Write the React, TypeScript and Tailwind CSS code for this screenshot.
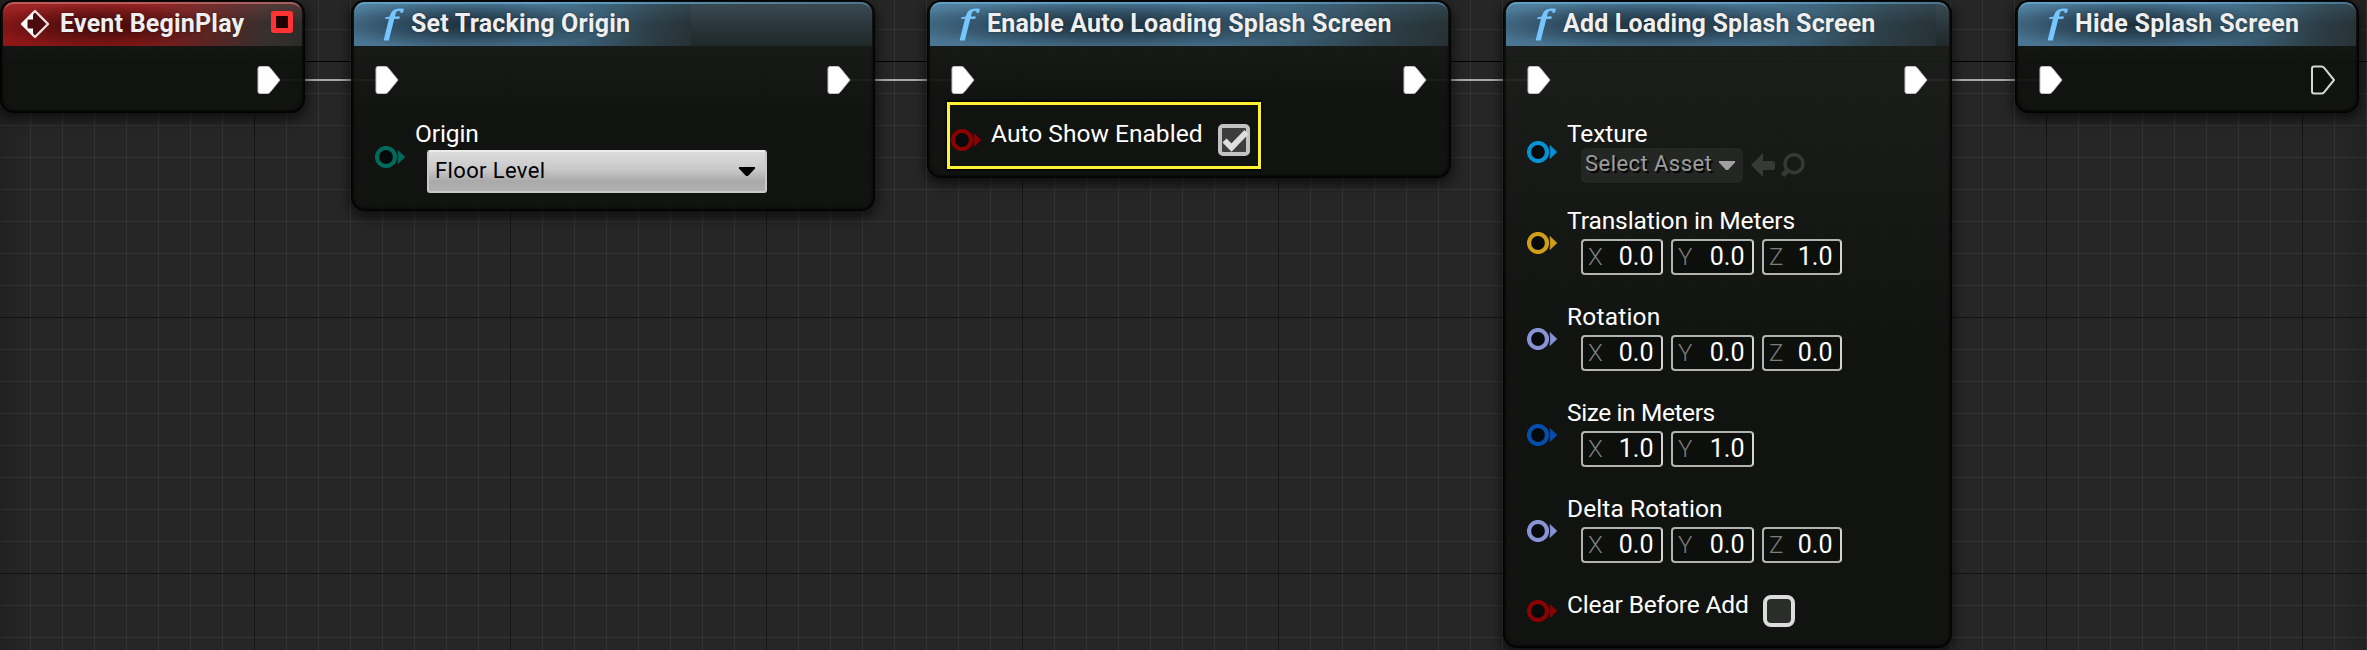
import type { ReactNode } from "react";
import clsx from "clsx";

function FunctionIcon() {
  return (
    <span className="flex h-11 w-[57px] items-center justify-center pl-[17px]">
      <span className="-mt-[5px] inline-block scale-x-[1.5] font-['Liberation_Serif',serif] text-[33px] leading-[40px] text-[#76c6ff] italic [-webkit-text-stroke:.8px_#76c6ff]">
        f
      </span>
    </span>
  );
}

function EventIcon() {
  return (
    <span className="flex h-11 w-[57px] items-center pl-[17px]">
      <svg width="30" height="30" viewBox="0 0 30 30">
        <path d="M15 2 28 15 15 28 2 15Z" fill="#4a0c0c" stroke="#f0dede" strokeWidth="2.4" strokeLinejoin="round" />
        <path d="M13 3 13 10.5H7.5V19.5H13V27L1 15Z" fill="#ffffff" />
      </svg>
    </span>
  );
}

function ExecPin({ hollow = false }: { hollow?: boolean }) {
  return (
    <svg width="24" height="30" viewBox="0 0 24 30">
      <path
        d="M1 3.5Q1 1.5 3 1.5H10.5Q12 1.5 13 2.7L23 15 13 27.3Q12 28.5 10.5 28.5H3Q1 28.5 1 26.5Z"
        fill={hollow ? "#0c0f0c" : "#ffffff"}
        stroke={hollow ? "#d6d6d6" : "#c4c4c4"}
        strokeWidth={hollow ? 2 : 1}
        strokeLinejoin="round"
      />
    </svg>
  );
}

function DataPin({ className }: { className: string }) {
  return (
    <svg width="30" height="22" viewBox="0 0 30 22" className={clsx("shrink-0", className)}>
      <circle cx="11" cy="11" r="9" fill="#070a0a" stroke="currentColor" strokeWidth="4.2" />
      <path d="M23 4.6 29.8 11 23 17.4Q24.2 11 23 4.6Z" fill="currentColor" stroke="currentColor" strokeWidth=".8" />
    </svg>
  );
}

function ExecRow({ input = true, hollow = false }: { input?: boolean; hollow?: boolean }) {
  return (
    <div className="mt-[19px] flex h-[30px] shrink-0 items-center justify-between px-[21px]">
      {input ? <ExecPin /> : <span />}
      <ExecPin hollow={hollow} />
    </div>
  );
}

function Param({
  label,
  tracking,
  pin,
  children,
  inline = false,
}: {
  label: string;
  tracking: string;
  pin: string;
  children: ReactNode;
  inline?: boolean;
}) {
  return (
    <div className="flex items-start pl-[21px]">
      <DataPin className={pin} />
      <div className={clsx("ml-[10px] flex", inline ? "items-start" : "flex-col")}>
        <span className={clsx("text-[24.5px] leading-[28px] whitespace-nowrap text-white", tracking)}>{label}</span>
        {children}
      </div>
    </div>
  );
}

function Field({ axis, value, className }: { axis: string; value: string; className: string }) {
  return (
    <div
      className={clsx(
        "flex h-9 items-center justify-between rounded-[4px] border-2 border-[#b2b2b0] border-r-[#d4d4d2] bg-[#0d0f0d] pr-[7.5px] pl-[5px] leading-8",
        className,
      )}
    >
      <span className="text-[24px] font-light text-[#7c7d7b]">{axis}</span>
      <span className="text-[25px] text-white">{value}</span>
    </div>
  );
}

function Vector({ values }: { values: string[] }) {
  const axes = ["X", "Y", "Z"];
  const widths = ["w-[82px]", "w-[83px]", "w-[80px]"];
  return (
    <div className="mt-1 ml-[14px] flex gap-2">
      {values.map((v, i) => (
        <Field key={axes[i]} axis={axes[i]} value={v} className={widths[i]} />
      ))}
    </div>
  );
}

function Checkbox({ checked = false, className }: { checked?: boolean; className?: string }) {
  return (
    <span
      className={clsx(
        "mt-1 flex size-8 items-center justify-center border-4",
        checked ? "rounded-[5px] border-[#c2c2c2] bg-[#3c3e3d]" : "rounded-[8px] border-[#dcdcdc] bg-[#2b2d2b]",
        className,
      )}
    >
      {checked && (
        <svg width="32" height="32" viewBox="0 0 32 32" className="shrink-0">
          <path d="M6.5 16.5 13.5 23.5 28.5 8" fill="none" stroke="#dedede" strokeWidth="5.8" />
        </svg>
      )}
    </span>
  );
}

function Node({
  title,
  tracking,
  frame,
  glow,
  event = false,
  children,
}: {
  title: string;
  tracking: string;
  frame: string;
  glow: string;
  event?: boolean;
  children: ReactNode;
}) {
  return (
    <section
      className={clsx(
        "absolute top-0 flex flex-col rounded-[14px] bg-[linear-gradient(180deg,rgba(28,30,27,.9),rgba(15,18,14,.95)_55%)] px-[3px] pt-[2px] shadow-[0_5px_12px_2px_rgba(0,0,0,.55),inset_0_0_3px_2px_#000]",
        frame,
      )}
    >
      <header
        className={clsx(
          "flex h-11 shrink-0 overflow-hidden rounded-t-[11px]",
          event ? "bg-[#2c2b29]" : "bg-[linear-gradient(180deg,#3c4b52,#28343a_60%,#202829)]",
        )}
      >
        <div
          className={clsx(
            "flex h-11 shrink-0",
            glow,
            event
              ? "bg-[radial-gradient(ellipse_38%_52%_at_33%_54%,rgba(50,8,8,.85),rgba(60,10,10,.45)_55%,transparent),linear-gradient(180deg,rgba(255,120,120,.16),transparent_50%),linear-gradient(100deg,#8e1717_0%,#861717_45%,#5c2422_68%,#35302e_88%,#2c2b29_100%)]"
              : "bg-[radial-gradient(ellipse_42%_56%_at_34%_52%,rgba(28,44,56,.95),rgba(30,50,64,.6)_50%,transparent),linear-gradient(180deg,rgba(120,190,230,.14),transparent_50%),linear-gradient(102deg,#4a7693_0%,#46708c_52%,#395c71_70%,#2d3f48_87%,#273135_100%)]",
          )}
        >
          {event ? <EventIcon /> : <FunctionIcon />}
          <h2
            className={clsx(
              "mt-[8px] text-[25px] leading-[28px] font-bold whitespace-nowrap text-[#efefef] [text-shadow:0_0_2px_rgba(0,0,0,.45)]",
              tracking,
            )}
          >
            {title}
          </h2>
          {event && (
            <span className="mt-[9px] ml-auto size-[22px] rounded-[3px] border-[5px] border-[#ff3333] bg-[#200000]" />
          )}
        </div>
      </header>
      <div
        className={clsx(
          "pointer-events-none absolute inset-x-[3px] top-[2px] h-11 rounded-t-[11px] border-t-2",
          event
            ? "border-[#c87070]/70 [mask-image:linear-gradient(90deg,#000,#000_60%,#777)]"
            : "border-[#64a8d4]/75 [mask-image:linear-gradient(90deg,#000,#000_50%,#0009)]",
        )}
      />
      {children}
    </section>
  );
}

export default function App() {
  return (
    <main className="relative h-[650px] w-[2367px] overflow-hidden bg-[#262626] font-['Roboto','Liberation_Sans',sans-serif]">
      <div className="absolute inset-0 bg-[linear-gradient(90deg,#343434_1px,transparent_1px),linear-gradient(180deg,#343434_1px,transparent_1px)] bg-[size:32px_32px] bg-[position:30px_29px]" />
      <div className="absolute inset-0 bg-[linear-gradient(90deg,#151515_1px,transparent_1px),linear-gradient(180deg,#131313_1px,transparent_1px)] bg-[size:256px_256px] bg-[position:254px_61px]" />
      <div className="absolute inset-x-0 top-[61px] h-px bg-black" />
      <div className="absolute inset-0 bg-[linear-gradient(90deg,rgba(0,0,0,.14),transparent_30px,transparent_2340px,rgba(0,0,0,.12))]" />
      <svg className="absolute inset-0" width="2367" height="650">
        <path d="M280 80H376M850 80H952M1426 80H1528M1927 80H2040" stroke="#a6a9a8" strokeWidth="2" />
      </svg>

      <Node
        event
        title="Event BeginPlay"
        tracking="tracking-[.2px]"
        frame="left-0 h-[113px] w-[305px]"
        glow="w-full pr-[9px]"
      >
        <ExecRow input={false} />
      </Node>

      <Node
        title="Set Tracking Origin"
        tracking="tracking-[.22px]"
        frame="left-[351px] h-[211px] w-[524px]"
        glow="w-[337px]"
      >
        <ExecRow />
        <div className="mt-[25px]">
          <Param label="Origin" tracking="tracking-[-.1px]" pin="mt-[26px] text-[#006a5c]">
            <div className="mt-0.5 ml-3 flex h-[43px] w-[340px] items-center justify-between rounded-[3px] border-2 border-[#c9c9c9] border-t-[#ececec] bg-[linear-gradient(180deg,#dcdcdc,#c8c8c8_45%,#aaaaaa_75%,#b0b0b0)] pr-2.5 pl-[6px]">
              <span className="-mt-px text-[22px] leading-7 tracking-[.36px] text-black">Floor Level</span>
              <svg width="16" height="9" viewBox="0 0 16 9">
                <path d="M0 0H16V1.5L9 9H7L0 1.5Z" fill="#000" />
              </svg>
            </div>
          </Param>
        </div>
      </Node>

      <Node
        title="Enable Auto Loading Splash Screen"
        tracking="tracking-[.2px]"
        frame="left-[927px] h-[178px] w-[524px]"
        glow="w-full"
      >
        <ExecRow />
        <div className="mt-[25px]">
          <Param inline label="Auto Show Enabled" tracking="tracking-[.03px]" pin="mt-[9px] text-[#8a0202]">
            <Checkbox checked className="ml-[15px]" />
          </Param>
        </div>
        <div className="absolute top-[102px] left-5 h-[67px] w-[314px] border-[3px] border-[#fff133] shadow-[0_0_2px_1px_#000]" />
      </Node>

      <Node
        title="Add Loading Splash Screen"
        tracking="tracking-[.17px]"
        frame="left-[1503px] h-[648px] w-[449px]"
        glow="w-[430px]"
      >
        <ExecRow />
        <div className="mt-[25px] flex flex-col">
          <Param label="Texture" tracking="tracking-[-.1px]" pin="mt-[21px] text-[#0593d3]">
            <div className="ml-[14px] flex items-center">
              <div className="flex h-[35px] w-[162px] items-center justify-between rounded-[5px] bg-[#242624] pr-2 pl-[4px]">
                <span className="-mt-[3px] text-[22px] leading-7 tracking-[.45px] whitespace-nowrap text-[#9c9c9b] [text-shadow:2px_2px_1px_#000]">
                  Select Asset
                </span>
                <svg width="16" height="9" viewBox="0 0 16 9">
                  <path d="M0 0H16V1.5L9 9H7L0 1.5Z" fill="#a0a0a0" />
                </svg>
              </div>
              <svg width="24" height="24" viewBox="0 0 24 24" className="mb-px ml-2" fill="#373937">
                <path d="M12 0V8H22Q24 8 24 10V15Q24 17 22 17H12V24L0 12Z" />
              </svg>
              <svg width="24" height="24" viewBox="0 0 24 24" className="mb-px ml-1.5" fill="none" stroke="#373937">
                <circle cx="13" cy="10.7" r="9" strokeWidth="3.4" />
                <path d="M7 17 1.5 22.5" strokeWidth="5" />
              </svg>
            </div>
          </Param>
          <div className="mt-6 flex flex-col gap-7">
            <Param label="Translation in Meters" tracking="tracking-[-.08px]" pin="mt-[25px] text-[#cf9f18]">
              <Vector values={["0.0", "0.0", "1.0"]} />
            </Param>
            <Param label="Rotation" tracking="tracking-[.2px]" pin="mt-[25px] text-[#8893d6]">
              <Vector values={["0.0", "0.0", "0.0"]} />
            </Param>
            <Param label="Size in Meters" tracking="tracking-[-.4px]" pin="mt-[25px] text-[#044fae]">
              <Vector values={["1.0", "1.0"]} />
            </Param>
            <Param label="Delta Rotation" tracking="tracking-[.1px]" pin="mt-[25px] text-[#8893d6]">
              <Vector values={["0.0", "0.0", "0.0"]} />
            </Param>
            <Param inline label="Clear Before Add" tracking="tracking-[-.16px]" pin="mt-[9px] text-[#8a0202]">
              <Checkbox className="ml-[14px]" />
            </Param>
          </div>
        </div>
      </Node>

      <Node
        title="Hide Splash Screen"
        tracking="tracking-[.3px]"
        frame="left-[2015px] h-[113px] w-[344px]"
        glow="w-full"
      >
        <ExecRow hollow />
      </Node>
    </main>
  );
}
